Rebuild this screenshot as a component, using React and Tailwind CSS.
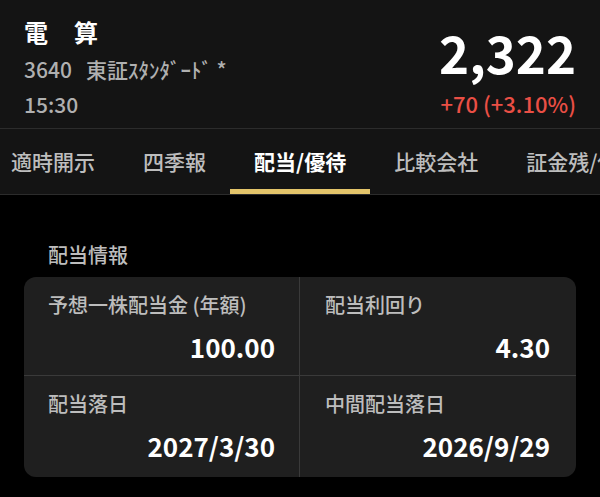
import React from "react";

const FONT = { fontFamily: '"Noto Sans CJK JP", "Noto Sans", sans-serif' };

const tabs = ["適時開示", "四季報", "配当/優待", "比較会社", "証金残/信用"];

function Cell({ label, value, right }) {
  return (
    <div className={`flex flex-col pt-[14px] ${right ? "pl-[25px] pr-[26px]" : "pl-[24px] pr-[24px] border-r border-[#3a3a3a]"}`}>
      <div className="text-[20px] leading-[28px] font-medium text-[#bdbdbd] whitespace-nowrap">{label}</div>
      <div className="mt-[14px] text-right text-[26px] leading-[28px] font-semibold text-white">{value}</div>
    </div>
  );
}

export default function App() {
  return (
    <div style={FONT} className="w-[600px] h-[497px] bg-black overflow-hidden">
      <div className="h-[128px] bg-[#141414] flex justify-between pl-[24px] pr-[24px]">
        <div className="flex flex-col pt-[16px]">
          <div className="text-[24px] leading-[32px] font-bold text-white tracking-[1px]">電　算</div>
          <div className="mt-[6px] text-[21px] leading-[30px] font-medium text-[#b0b0b0] whitespace-nowrap">
            3640<span className="ml-[14px]">東証ｽﾀﾝﾀﾞｰﾄﾞ *</span>
          </div>
          <div className="mt-[5px] text-[21px] leading-[30px] font-medium text-[#b0b0b0]">15:30</div>
        </div>
        <div className="flex flex-col items-end pt-[22px]">
          <div className="text-[51px] leading-[60px] font-semibold text-white">2,322</div>
          <div className="mt-[7px] text-[22px] leading-[28px] font-medium text-[#ea4f45]">+70 (+3.10%)</div>
        </div>
      </div>
      <div className="h-[67px] bg-[#141414] border-t border-b border-[#2c2c2c] flex items-stretch overflow-hidden">
        <div className="flex items-stretch ml-[-13px]">
          {tabs.map((t, i) => (
            <div key={t} className="relative px-[24px] flex items-center">
              <span className={`text-[21px] whitespace-nowrap ${i === 2 ? "text-white font-bold" : "text-[#bdbdbd] font-medium"}`}>{t}</span>
              {i === 2 && <div className="absolute left-0 right-0 bottom-0 h-[5px] bg-[#e3c46a]" />}
            </div>
          ))}
        </div>
      </div>
      <div className="pt-[46px] px-[24px]">
        <div className="pl-[24px] text-[20px] leading-[28px] font-medium text-[#bdbdbd]">配当情報</div>
        <div className="mt-[8px] bg-[#1f1f1f] rounded-[12px] grid grid-cols-2">
          <div className="grid grid-cols-2 col-span-2 h-[99px] border-b border-[#3a3a3a]">
            <Cell label="予想一株配当金 (年額)" value="100.00" />
            <Cell label="配当利回り" value="4.30" right />
          </div>
          <div className="grid grid-cols-2 col-span-2 h-[101px]">
            <Cell label="配当落日" value="2027/3/30" />
            <Cell label="中間配当落日" value="2026/9/29" right />
          </div>
        </div>
      </div>
    </div>
  );
}
